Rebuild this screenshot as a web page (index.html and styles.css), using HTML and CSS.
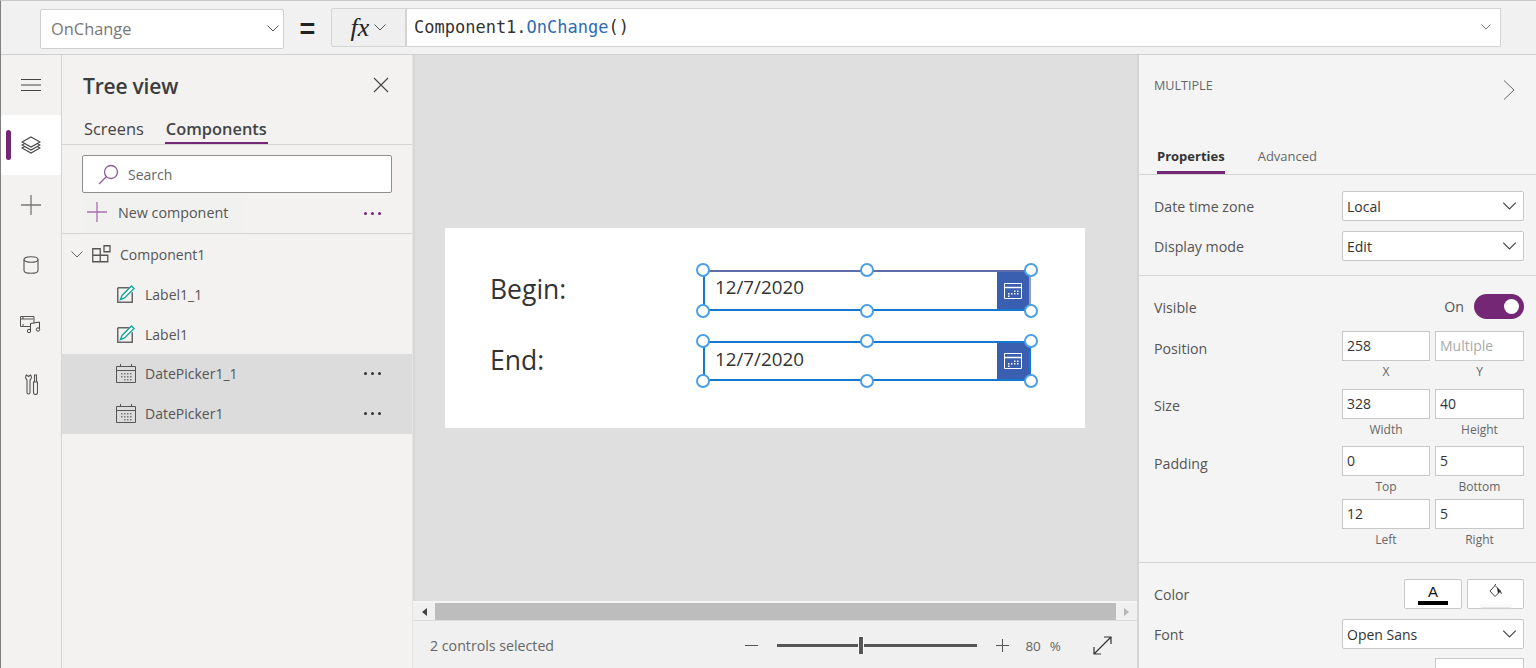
FILE: index.html
```html
<!DOCTYPE html>
<html lang="en">
<head>
<meta charset="utf-8">
<title>Power Apps Studio</title>
<link rel="stylesheet" href="styles.css">
</head>
<body>
<svg class="defs" width="0" height="0" aria-hidden="true">
  <symbol id="chev" viewBox="0 0 12 7"><path d="M.5.5 6 6 11.500.5" fill="none" stroke="currentColor" stroke-width="1"/></symbol>
  <symbol id="cal" viewBox="0 0 20 19"><path d="M.5 2.500h19v16H.5zM.5 6.500h19M4.500 0v3M15.500 0v3" fill="none" stroke="#555" stroke-width="1"/><path d="M5 9h1.500v1.500H5zM8 9h1.500v1.500H8zM11 9h1.500v1.500H11zM14 9h1.500v1.500H14zM5 12h1.500v1.500H5zM8 12h1.500v1.500H8zM11 12h1.500v1.500H11zM14 12h1.500v1.500H14zM8 15h1.500v1.500H8zM11 15h1.500v1.500H11zM14 15h1.500v1.500H14z" fill="#777"/></symbol>
  <symbol id="edit" viewBox="0 0 18 18"><path d="M.75 2.750h12M.75 2.750v14.500h14.500v-10" fill="none" stroke="#666" stroke-width="1.500"/><path d="M3.500 14.500 5 10.500 14.500 1l2.500 2.500L7.500 13z" fill="#fff" stroke="#13a89e" stroke-width="1.400"/></symbol>
  <symbol id="pickcal" viewBox="0 0 18 16"><path d="M.5.500h17v15H.5z" fill="none" stroke="#fff"/><path d="M.5 4.500h17" stroke="#fff" stroke-width="1.500"/><path d="M4 10h1.500v1.500H4zM7 10h1.500v1.500H7zM10 7.500h1.500V9H10zM13 7.500h1.500V9H13zM10 10h1.500v1.500H10zM13 10h1.500v1.500H13zM4 12.500h1.500V14H4z" fill="#fff"/></symbol>
</svg>

<header class="formula-bar">
  <div class="prop-select"><span>OnChange</span><svg class="chev-icon"><use href="#chev"/></svg></div>
  <div class="equals">=</div>
  <div class="fx-button"><span class="fx">fx</span><svg class="chev-icon"><use href="#chev"/></svg></div>
  <div class="formula-input">
    <code class="formula">Component1.<span class="fn">OnChange</span>()</code>
    <svg class="chev-small"><use href="#chev"/></svg>
  </div>
</header>

<div class="workspace">
  <nav class="rail">
    <div class="rail-item">
      <svg width="20" height="12" viewBox="0 0 20 12"><path d="M0 .5h20M0 6h20M0 11.500h20" stroke="#444" stroke-width="1"/></svg>
    </div>
    <div class="rail-item active">
      <span class="rail-mark"></span>
      <svg width="20" height="18" viewBox="0 0 20 18"><g fill="#fff" stroke="#444" stroke-width="1.100"><path d="M10 7 19 12 10 17 1 12z"/><path d="M10 4 19 9 10 14 1 9z"/><path d="M10 1 19 6 10 11 1 6z"/></g></svg>
    </div>
    <div class="rail-item">
      <svg width="20" height="20" viewBox="0 0 20 20"><path d="M10 0v20M0 10h20" stroke="#777" stroke-width="1.300"/></svg>
    </div>
    <div class="rail-item">
      <svg width="16" height="18" viewBox="0 0 16 18"><path d="M1 3.500v11c0 1.500 3 2.800 7 2.800s7-1.300 7-2.800v-11" fill="none" stroke="#555" stroke-width="1.100"/><ellipse cx="8" cy="3.500" rx="7" ry="2.800" fill="none" stroke="#555" stroke-width="1.100"/></svg>
    </div>
    <div class="rail-item media">
      <svg width="22" height="18" viewBox="0 0 22 18"><path d="M10 11.500H.5v-10h13.500v7" fill="none" stroke="#555" stroke-width="1"/><path d="M.5 4h13M3 1.500v2.500M3 9v2.500" stroke="#555" stroke-width="1"/><path d="M10.500 15.500v-7l9-1.500v7" fill="none" stroke="#444" stroke-width="1"/><circle cx="9" cy="16" r="1.700" fill="none" stroke="#444"/><circle cx="18" cy="14.500" r="1.700" fill="none" stroke="#444"/></svg>
    </div>
    <div class="rail-item tools">
      <svg width="13" height="21" viewBox="0 0 13 21"><path d="M1.500 1C0 2.500.5 5 2 6v12.500a1.400 1.400 0 0 0 3 0V6c1.500-1 2-3.500.500-5L3.500 2.500z" fill="none" stroke="#555" stroke-width="1.100"/><path d="M9.500 1h2v7h-2zM8.500 8h4v10.500a2 2 0 0 1-4 0z" fill="none" stroke="#555" stroke-width="1.100"/></svg>
    </div>
  </nav>

  <aside class="tree">
    <div class="tree-head">
      <h1>Tree view</h1>
      <svg width="16" height="16" viewBox="0 0 16 16"><path d="M1 1l14 14M15 1 1 15" stroke="#444" stroke-width="1.100"/></svg>
    </div>
    <div class="tree-tabs">
      <span class="tree-tab">Screens</span>
      <span class="tree-tab current">Components</span>
    </div>
    <div class="search">
      <svg width="21" height="21" viewBox="0 0 21 21"><circle cx="13" cy="8" r="6.500" fill="none" stroke="#8d5a9e" stroke-width="1.300"/><path d="M8.500 12.500 1 20" stroke="#8d5a9e" stroke-width="1.300"/></svg>
      <span>Search</span>
    </div>
    <div class="new-row">
      <div class="new-button">
        <svg width="20" height="20" viewBox="0 0 20 20"><path d="M10 0v20M0 10h20" stroke="#a571ad" stroke-width="1.300"/></svg>
        <span>New component</span>
      </div>
      <span class="dots purple"><i></i><i></i><i></i></span>
    </div>
    <ul class="tree-list">
      <li class="node root">
        <svg class="chev-tree"><use href="#chev"/></svg>
        <svg width="19" height="18" viewBox="0 0 19 18"><path d="M.75 3.750h7.500v6.500H.75zM.75 10.250h7.500v6.500H.75zM8.250 10.250h7.500v6.500h-7.500z" fill="none" stroke="#555" stroke-width="1.300"/><path d="M12 .75h6v6h-6z" fill="none" stroke="#555" stroke-width="1.300"/></svg>
        <span>Component1</span>
      </li>
      <li class="node"><svg class="ico"><use href="#edit"/></svg><span>Label1_1</span></li>
      <li class="node"><svg class="ico"><use href="#edit"/></svg><span>Label1</span></li>
      <li class="node sel"><svg class="ico-cal"><use href="#cal"/></svg><span>DatePicker1_1</span><span class="dots"><i></i><i></i><i></i></span></li>
      <li class="node sel"><svg class="ico-cal"><use href="#cal"/></svg><span>DatePicker1</span><span class="dots"><i></i><i></i><i></i></span></li>
    </ul>
  </aside>

  <main class="stage">
    <div class="canvas">
      <section class="artboard">
        <div class="art-row">
          <div class="art-label">Begin:</div>
          <div class="picker first">
            <span>12/7/2020</span>
            <div class="pick-btn"><svg width="18" height="16"><use href="#pickcal"/></svg></div>
            <i class="h tl"></i><i class="h tc"></i><i class="h tr"></i><i class="h bl"></i><i class="h bc"></i><i class="h br"></i>
          </div>
        </div>
        <div class="art-row">
          <div class="art-label">End:</div>
          <div class="picker">
            <span>12/7/2020</span>
            <div class="pick-btn"><svg width="18" height="16"><use href="#pickcal"/></svg></div>
            <i class="h tl"></i><i class="h tc"></i><i class="h tr"></i><i class="h bl"></i><i class="h bc"></i><i class="h br"></i>
          </div>
        </div>
      </section>
    </div>
    <div class="hscroll">
      <span class="arrow left"></span>
      <div class="thumb"></div>
      <span class="arrow right"></span>
    </div>
    <footer class="status">
      <span class="status-text">2 controls selected</span>
      <div class="zoom">
        <svg width="13" height="13" viewBox="0 0 13 13"><path d="M0 6.500h13" stroke="#555"/></svg>
        <div class="slider"><span class="knob"></span></div>
        <svg width="13" height="13" viewBox="0 0 13 13"><path d="M6.500 0v13M0 6.500h13" stroke="#555"/></svg>
        <span class="zoom-val">80</span><span class="zoom-unit">%</span>
        <svg class="expand" width="19" height="19" viewBox="0 0 19 19"><path d="M1.500 17.500 17.500 1.500M11 1h7v7M1 11v7h7" fill="none" stroke="#333" stroke-width="1.200"/></svg>
      </div>
    </footer>
  </main>

  <aside class="props">
    <div class="props-head">
      <span>MULTIPLE</span>
      <svg width="12" height="20" viewBox="0 0 12 20"><path d="M1 .5 11 10 1 19.500" fill="none" stroke="#666" stroke-width="1"/></svg>
    </div>
    <div class="props-tabs">
      <span class="props-tab current">Properties</span>
      <span class="props-tab">Advanced</span>
    </div>
    <div class="section one">
      <div class="line"><label>Date time zone</label><div class="select">Local<svg><use href="#chev"/></svg></div></div>
      <div class="line"><label>Display mode</label><div class="select">Edit<svg><use href="#chev"/></svg></div></div>
    </div>
    <div class="section two">
      <div class="line toggle-line"><label>Visible</label><div class="toggle-wrap"><span>On</span><span class="toggle"><i></i></span></div></div>
      <div class="line pair-line l-pos"><label>Position</label>
        <div class="pair">
          <div class="field"><div class="input">258</div><small>X</small></div>
          <div class="field"><div class="input ph">Multiple</div><small>Y</small></div>
        </div>
      </div>
      <div class="line pair-line l-size"><label>Size</label>
        <div class="pair">
          <div class="field"><div class="input">328</div><small>Width</small></div>
          <div class="field"><div class="input">40</div><small>Height</small></div>
        </div>
      </div>
      <div class="line pair-line l-pad"><label>Padding</label>
        <div class="pair">
          <div class="field"><div class="input">0</div><small>Top</small></div>
          <div class="field"><div class="input">5</div><small>Bottom</small></div>
          <div class="field"><div class="input">12</div><small>Left</small></div>
          <div class="field"><div class="input">5</div><small>Right</small></div>
        </div>
      </div>
    </div>
    <div class="section three">
      <div class="line"><label>Color</label>
        <div class="color-btns">
          <div class="cbtn"><span class="a">A</span><span class="a-bar"></span></div>
          <div class="cbtn">
            <svg width="14" height="15" viewBox="0 0 14 15"><path d="M6 1.500 1 7l5 5.500L11.500 7z" fill="#fff" stroke="#444"/><path d="M5.500 1.500 7 0" stroke="#444"/><path d="M11.500 7c1 1 1.500 2 1 3-1-.5-1.500-2-1-3zM8 3.500 11.500 7 9 9.500z" fill="#222"/></svg>
            <span class="paint-bar"></span>
          </div>
        </div>
      </div>
      <div class="line"><label>Font</label><div class="select">Open Sans<svg><use href="#chev"/></svg></div></div>
      <div class="line last"><div class="input stub"></div></div>
    </div>
  </aside>
</div>
</body>
</html>
```

FILE: styles.css
```css
* { box-sizing: border-box; }
html, body { margin: 0; height: 668px; overflow: hidden; }
body {
  font-family: "Open Sans", "Noto Sans", sans-serif;
  font-size: 14px;
  color: #444;
  background: #f3f2f1;
  border-left: 1px solid #808080;
  border-top: 1px solid #c8c8c8;
}
.defs { position: absolute; }

.formula-bar {
  height: 54px;
  display: flex;
  align-items: flex-start;
  padding: 7px 35px 0 39px;
  background: #f1f1f1;
  border-bottom: 1px solid #cfcfcf;
}
.chev-icon { width: 12px; height: 7px; color: #555; }
.prop-select {
  width: 244px;
  height: 40px;
  margin-top: 1px;
  background: #fff;
  border: 1px solid #cfcfcf;
  border-radius: 2px;
  display: flex;
  align-items: center;
  justify-content: space-between;
  padding: 0 4px 2px 10px;
  font-size: 16.400px;
  color: #777;
}
.equals { width: 47px; text-align: center; font-size: 27px; font-weight: 600; line-height: 42px; color: #222; font-family: "Liberation Sans", sans-serif; }
.fx-button {
  width: 75px;
  height: 39px;
  background: #efefef;
  border: 1px solid #d4d4d4;
  border-radius: 2px 0 0 2px;
  display: flex;
  align-items: center;
  justify-content: center;
  gap: 5px;
}
.fx { font-family: "Liberation Serif", serif; font-style: italic; font-size: 26px; color: #222; line-height: 30px; }
.formula-input {
  flex: 1;
  height: 39px;
  background: #fff;
  border: 1px solid #d4d4d4;
  display: flex;
  align-items: center;
  justify-content: space-between;
  padding: 0 9px 2px 7px;
}
.formula { font-family: "DejaVu Sans Mono", monospace; font-size: 17px; color: #333; }
.fn { color: #2f6bb2; }
.chev-small { width: 10px; height: 6px; color: #555; }

.workspace { display: flex; height: 613px; }

.rail { width: 61px; border-right: 1px solid #d4d4d4; background: #f3f2f1; flex: none; }
.rail-item { height: 60px; display: flex; align-items: center; justify-content: center; position: relative; }
.rail-item.active { background: #fff; border-radius: 2px; margin-right: 0; }
.rail-item.media { height: 57px; }
.rail-item.tools { height: 65px; }
.rail-mark { position: absolute; left: 5px; top: 15px; width: 5px; height: 30px; border-radius: 3px; background: #742774; }

.tree { width: 351px; flex: none; background: #f3f2f1; border-right: 1px solid #e4e4e4; }
.tree-head { height: 60px; display: flex; align-items: center; justify-content: space-between; padding: 0 23px 0 21px; }
.tree-head h1 { margin: 2px 0 0; font-size: 21px; font-weight: 600; color: #3c3c3c; letter-spacing: -.2px; }
.tree-tabs { height: 30px; display: flex; gap: 22px; padding-left: 22px; border-bottom: 1px solid #d6d6d6; font-size: 16.400px; line-height: 28px; }
.tree-tab { height: 29px; color: #444; }
.tree-tab.current { font-weight: 600; border-bottom: 2px solid #742774; padding: 0 1px; margin-left: -1px; }
.search {
  margin: 10px 20px 0;
  height: 38px;
  background: #fff;
  border: 1px solid #8f8f8f;
  border-radius: 2px;
  display: flex;
  align-items: center;
  gap: 9px;
  padding-left: 15px;
  font-size: 14px;
  color: #666;
}
.new-row { height: 40px; margin-left: 20px; padding-right: 31px; display: flex; align-items: center; justify-content: space-between; }
.new-button { display: flex; align-items: center; gap: 11px; width: 160px; height: 39px; padding: 0 0 2px 5px; background: #f1f1f0; color: #555; font-size: 14.300px; }
.dots { display: flex; gap: 4px; }
.dots i { width: 3px; height: 3px; border-radius: 50%; background: #333; }
.dots.purple i { background: #742774; }
.tree-list { list-style: none; margin: 0; padding: 0; border-top: 1px solid #d6d6d6; }
.node { height: 40px; display: flex; align-items: center; padding-left: 54px; gap: 10px; font-size: 14px; color: #555; }
.node.root { padding-left: 9px; gap: 9px; }
.node.sel { background: #dcdcdc; padding: 0 31px 2px 54px; gap: 9px; }
.node.sel .dots { margin-left: auto; }
.chev-tree { width: 12px; height: 7px; color: #666; }
.ico { width: 18px; height: 18px; margin-left: 1px; }
.ico-cal { width: 20px; height: 19px; }

.stage { flex: 1; display: flex; flex-direction: column; min-width: 0; }
.canvas { height: 546px; background: #dfdfdf; box-shadow: inset 3px 0 3px -2px #cfcfcf; padding: 173px 0 0 32px; }
.artboard { width: 640px; height: 200px; background: #fff; padding-top: 42px; display: flex; flex-direction: column; gap: 30px; }
.art-row { display: flex; align-items: center; padding-left: 45px; }
.art-label { width: 213px; margin-top: -3px; font-size: 26.500px; color: #333; }
.picker {
  position: relative;
  width: 328px;
  height: 40px;
  border: 2px solid #1578d0;
  display: flex;
  align-items: center;
  justify-content: space-between;
  padding-left: 10px;
  font-size: 18.800px;
  color: #333;
}
.picker.first { height: 41px; border-top-color: #5f6ea8; border-right-color: #8e9cc6; }
.picker > span { margin-top: -5px; }
.picker.first > span { margin-top: -7px; }
.pick-btn { width: 32px; align-self: stretch; background: #3a5fb0; display: flex; align-items: center; justify-content: center; }
.h { position: absolute; width: 14px; height: 14px; border-radius: 50%; background: #fff; border: 2px solid #4a9fe6; }
.tl { left: -9px; top: -9px; }
.tc { left: 155px; top: -9px; }
.tr { right: -9px; top: -9px; }
.bl { left: -9px; bottom: -9px; }
.bc { left: 155px; bottom: -9px; }
.br { right: -9px; bottom: -9px; }

.hscroll { height: 20px; background: #f0f0f0; border-top: 2px solid #f5f5f5; border-bottom: 1px solid #dcdcdc; display: flex; align-items: center; }
.thumb { flex: 1; height: 17px; background: #bdbdbd; }
.arrow { width: 21px; display: flex; justify-content: center; }
.arrow.left { width: 22px; }
.arrow::before { content: ""; border: 4px solid transparent; }
.arrow.left::before { border-right: 5px solid #444; border-left: 0; }
.arrow.right::before { border-left: 5px solid #b5b5b5; border-right: 0; }
.status { flex: 1; background: #f0f0f0; display: flex; align-items: center; justify-content: space-between; padding: 2px 25px 0 17px; font-size: 14.200px; color: #666; }
.zoom { display: flex; align-items: center; }
.slider { position: relative; width: 200px; height: 3px; background: #555; margin: 0 19px; }
.knob { position: absolute; left: 81px; top: -7px; width: 6px; height: 17px; background: #555; border-left: 1px solid #fff; border-right: 1px solid #fff; }
.zoom-val { margin-left: 16px; font-size: 13.500px; }
.zoom-unit { margin-left: 9px; font-size: 13.500px; }
.expand { margin-left: 32px; }

.props { flex: none; width: 399px; background: #f4f4f4; border-left: 2px solid #d4d4d4; }
.props-head { height: 59px; padding: 22px 21px 0 15px; display: flex; justify-content: space-between; align-items: flex-start; font-size: 12.600px; color: #666; }
.props-head svg { margin-top: 3px; }
.props-tabs { height: 61px; display: flex; align-items: flex-end; gap: 33px; padding-left: 18px; border-bottom: 1px solid #d4d4d4; font-size: 13px; color: #666; }
.props-tab { height: 33px; line-height: 30px; }
.props-tab.current { font-weight: 700; color: #333; border-bottom: 3px solid #742774; }
.section { padding: 0 12px 0 15px; }
.section.one { height: 101px; padding-top: 16px; border-bottom: 1px solid #d4d4d4; }
.section.two { height: 287px; padding-top: 17px; border-bottom: 1px solid #d4d4d4; }
.section.three { padding-top: 16px; }
.line { display: flex; justify-content: space-between; align-items: center; height: 30px; margin-bottom: 10px; font-size: 14.200px; color: #555; }
.line label { color: #555; }
.select { position: relative; width: 182px; height: 30px; background: #fff; border: 1px solid #c8c8c8; border-radius: 2px; padding-left: 4px; display: flex; align-items: center; font-size: 14px; color: #333; }
.select svg { position: absolute; right: 6px; top: 10px; width: 15px; height: 8px; color: #444; }
.toggle-line { height: 26px; margin-bottom: 12px; }
.toggle-line label { margin-top: 3px; }
.toggle-wrap { display: flex; align-items: center; gap: 10px; }
.toggle { width: 50px; height: 25px; border-radius: 13px; background: #742774; position: relative; display: block; }
.toggle i { position: absolute; right: 5px; top: 5px; width: 15px; height: 15px; border-radius: 50%; background: #fff; }
.pair-line { height: auto; align-items: flex-start; margin-bottom: 0; }
.pair-line label { margin-top: 7px; }
.pair-line.l-pos { height: 58px; }
.pair-line.l-pos label { margin-top: 8px; }
.pair-line.l-size { height: 57px; }
.pair-line.l-pad label { margin-top: 8px; }
.pair { width: 182px; display: grid; grid-template-columns: 88px 89px; column-gap: 5px; row-gap: 0; }
.field { text-align: center; height: 53px; }
.input { height: 30px; background: #fff; border: 1px solid #c8c8c8; line-height: 28px; text-align: left; padding-left: 4px; color: #333; font-size: 14px; }
.input.ph { color: #aaa; }
.input.stub { width: 89px; margin-left: auto; }
.field small { display: block; font-size: 12px; line-height: 22px; color: #666; }
.last { justify-content: flex-end; margin-top: -1px; }
.color-btns { display: flex; gap: 5px; }
.cbtn { width: 57px; height: 30px; border: 1px solid #c8c8c8; border-radius: 2px; background: #fff; position: relative; display: flex; flex-direction: column; align-items: center; }
.cbtn:first-child { width: 58px; }
.a { font-family: "Liberation Sans", sans-serif; font-size: 15px; line-height: 17px; color: #111; margin-top: 3px; }
.a-bar { width: 30px; height: 4px; background: #000; margin-top: 1px; }
.cbtn svg { margin-top: 4px; }
.paint-bar { width: 30px; height: 3px; background: #fafafa; box-shadow: 0 1px 2px #ddd; margin-top: 5px; }
```
